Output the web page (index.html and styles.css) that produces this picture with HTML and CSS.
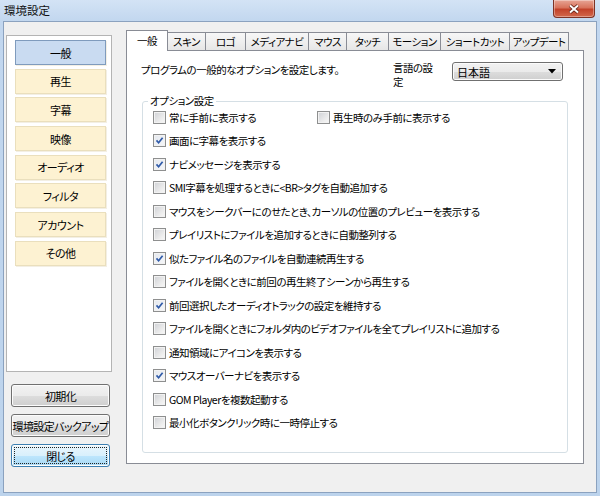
FILE: index.html
```html
<!DOCTYPE html>
<html lang="ja">
<head>
<meta charset="utf-8">
<title>環境設定</title>
<link rel="stylesheet" href="styles.css">
</head>
<body>
<div class="window">
  <div class="titlebar">
    <span class="title">環境設定</span>
    <div class="close">
      <svg width="12" height="10" viewBox="0 0 12 10"><path class="xs" d="M2 1.5 L10 8.5 M10 1.5 L2 8.5"/><path class="xf" d="M2 1.5 L10 8.5 M10 1.5 L2 8.5"/></svg>
    </div>
  </div>
  <div class="client">
    <div class="side">
      <div class="navpanel">
        <div class="nav active">一般</div>
        <div class="nav">再生</div>
        <div class="nav">字幕</div>
        <div class="nav">映像</div>
        <div class="nav">オーディオ</div>
        <div class="nav">フィルタ</div>
        <div class="nav">アカウント</div>
        <div class="nav">その他</div>
      </div>
      <div class="btns">
        <button class="btn">初期化</button>
        <button class="btn">環境設定バックアップ</button>
        <button class="btn focus">閉じる</button>
      </div>
    </div>
    <div class="main">
      <div class="tabs">
        <div class="tab sel">一般</div>
        <div class="tab">スキン</div>
        <div class="tab">ロゴ</div>
        <div class="tab">メディアナビ</div>
        <div class="tab">マウス</div>
        <div class="tab">タッチ</div>
        <div class="tab">モーション</div>
        <div class="tab">ショートカット</div>
        <div class="tab">アップデート</div>
      </div>
      <div class="panel">
        <div class="head">
          <p class="desc">プログラムの一般的なオプションを設定します。</p>
          <div class="lang">
            <span class="lang-label">言語の設<br>定</span>
            <div class="combo"><span>日本語</span><svg width="8" height="5" viewBox="0 0 8 5"><path d="M0 0 H8 L4 4.5 Z"/></svg></div>
          </div>
        </div>
        <fieldset class="group">
          <legend>オプション設定</legend>
          <div class="opts">
            <div class="row">
              <label class="opt first"><span class="cb"></span>常に手前に表示する</label>
              <label class="opt"><span class="cb"></span>再生時のみ手前に表示する</label>
            </div>
            <div class="row"><label class="opt"><span class="cb on"><svg viewBox="0 0 11 11"><path d="M2.5 5.4 L4.6 7.7 L8.6 2.8"/></svg></span>画面に字幕を表示する</label></div>
            <div class="row"><label class="opt"><span class="cb on"><svg viewBox="0 0 11 11"><path d="M2.5 5.4 L4.6 7.7 L8.6 2.8"/></svg></span>ナビメッセージを表示する</label></div>
            <div class="row"><label class="opt"><span class="cb"></span>SMI字幕を処理するときに&lt;BR&gt;タグを自動追加する</label></div>
            <div class="row"><label class="opt"><span class="cb"></span>マウスをシークバーにのせたとき、カーソルの位置のプレビューを表示する</label></div>
            <div class="row"><label class="opt"><span class="cb"></span>プレイリストにファイルを追加するときに自動整列する</label></div>
            <div class="row"><label class="opt"><span class="cb on"><svg viewBox="0 0 11 11"><path d="M2.5 5.4 L4.6 7.7 L8.6 2.8"/></svg></span>似たファイル名のファイルを自動連続再生する</label></div>
            <div class="row"><label class="opt"><span class="cb"></span>ファイルを開くときに前回の再生終了シーンから再生する</label></div>
            <div class="row"><label class="opt"><span class="cb on"><svg viewBox="0 0 11 11"><path d="M2.5 5.4 L4.6 7.7 L8.6 2.8"/></svg></span>前回選択したオーディオトラックの設定を維持する</label></div>
            <div class="row"><label class="opt"><span class="cb"></span>ファイルを開くときにフォルダ内のビデオファイルを全てプレイリストに追加する</label></div>
            <div class="row"><label class="opt"><span class="cb"></span>通知領域にアイコンを表示する</label></div>
            <div class="row"><label class="opt"><span class="cb on"><svg viewBox="0 0 11 11"><path d="M2.5 5.4 L4.6 7.7 L8.6 2.8"/></svg></span>マウスオーバーナビを表示する</label></div>
            <div class="row"><label class="opt"><span class="cb"></span>GOM Playerを複数起動する</label></div>
            <div class="row"><label class="opt"><span class="cb"></span>最小化ボタンクリック時に一時停止する</label></div>
          </div>
        </fieldset>
      </div>
    </div>
  </div>
</div>
</body>
</html>
```
FILE: styles.css
```css
* { box-sizing: border-box; }
html, body {
  margin: 0;
  padding: 0;
}
body {
  width: 600px;
  height: 496px;
  overflow: hidden;
  font-family: "Noto Sans CJK JP", "Noto Sans", sans-serif;
  font-size: 10.5px;
  letter-spacing: -0.5px;
  font-feature-settings: "palt";
  color: #000;
  background: #bcd2ec;
}
.window {
  height: 496px;
  display: flex;
  flex-direction: column;
  background: linear-gradient(to bottom, #d3e3f5 0px, #c2d7ef 21px, #bcd3ec 100%);
}
.titlebar {
  height: 21px;
  flex: none;
  display: flex;
  align-items: flex-start;
  padding-left: 4px;
}
.title {
  line-height: 20px;
  font-size: 11.5px;
  letter-spacing: 0;
  color: #111;
}
.close {
  margin-left: auto;
  margin-right: 5px;
  width: 42px;
  height: 18px;
  border: 1px solid #7d3326;
  border-top: none;
  border-radius: 0 0 4px 4px;
  background: linear-gradient(to bottom, #e7a595 0%, #d8735c 45%, #c2422a 55%, #d2684c 100%);
  display: flex;
  align-items: center;
  justify-content: center;
  box-shadow: inset 0 0 0 1px rgba(255,255,255,0.35);
}
.close .xs { stroke: #5b1d12; stroke-width: 3.6; fill: none; }
.close .xf { stroke: #fff; stroke-width: 2; fill: none; }
.client {
  flex: 1;
  margin: 0 3px 3px 3px;
  border: 1px solid #8ba2bf;
  background: #f0f0f0;
  display: flex;
}
.side {
  width: 106px;
  margin-left: 2px;
  padding-top: 13px;
  display: flex;
  flex-direction: column;
}
.navpanel {
  height: 337px;
  border: 1px solid #b4b4b4;
  background: #fff;
  padding: 4px 5px 0 8px;
  display: flex;
  flex-direction: column;
  gap: 3.7px;
}
.nav {
  height: 25px;
  border: 1px solid #eadfbd;
  background: #fdf2d2;
  display: flex;
  align-items: center;
  justify-content: center;
  box-shadow: 1px 1px 0 #f3efe4;
  font-size: 11px;
}
.nav.active {
  background: #c9dbf1;
  border-color: #7f9bbd;
}
.btns {
  margin-top: 12px;
  padding-left: 5px;
  display: flex;
  flex-direction: column;
  gap: 7px;
}
.btn {
  width: 99px;
  height: 23px;
  padding: 0;
  font: inherit;
  font-size: 11px;
  letter-spacing: -0.6px;
  white-space: nowrap;
  font-feature-settings: "palt";
  color: #000;
  border: 1px solid #707070;
  border-radius: 3px;
  background: linear-gradient(to bottom, #f2f2f2 0%, #ebebeb 50%, #dddddd 51%, #cfcfcf 100%);
  box-shadow: inset 0 0 0 1px #fcfcfc;
}
.btn.focus {
  border-color: #3c7fb1;
  background: linear-gradient(to bottom, #eaf6fd 0%, #d9f0fc 50%, #bee6fd 51%, #a7d9f5 100%);
  outline: 1px dotted #222;
  outline-offset: -4px;
}
.main {
  width: 458px;
  margin-left: 14px;
  padding-top: 8px;
  display: flex;
  flex-direction: column;
}
.tabs {
  display: flex;
  align-items: flex-end;
  height: 21px;
  margin-bottom: -1px;
  position: relative;
  z-index: 1;
}
.tab {
  height: 18px;
  margin-bottom: 1px;
  border: 1px solid #898c95;
  border-bottom: none;
  border-left: none;
  background: linear-gradient(to bottom, #f7f7f7 0%, #efefef 50%, #e6e6e6 100%);
  display: flex;
  align-items: center;
  justify-content: center;
  white-space: nowrap;
}
.tab.sel {
  height: 21px;
  margin-bottom: 0;
  border-left: 1px solid #898c95;
  background: #fff;
  padding-bottom: 2px;
}
.tab:nth-child(1) { width: 42px; }
.tab:nth-child(2) { width: 38px; }
.tab:nth-child(3) { width: 40px; }
.tab:nth-child(4) { width: 63px; }
.tab:nth-child(5) { width: 38px; }
.tab:nth-child(6) { width: 42px; }
.tab:nth-child(7) { width: 52px; }
.tab:nth-child(8) { width: 69px; }
.tab:nth-child(9) { width: 59px; }
.panel {
  height: 414px;
  border: 1px solid #898c95;
  background: #fff;
  display: flex;
  flex-direction: column;
}
.head {
  display: flex;
  align-items: flex-start;
  padding: 11px 20px 0 14px;
}
.desc {
  margin: 0;
  line-height: 16px;
}
.lang {
  margin-left: auto;
  width: 170px;
  height: 24px;
  display: flex;
  justify-content: space-between;
  align-items: flex-start;
}
.lang-label {
  margin-top: -1px;
  line-height: 13.5px;
  white-space: nowrap;
}
.combo {
  width: 111px;
  height: 19px;
  border: 1px solid #707070;
  border-radius: 3px;
  background: linear-gradient(to bottom, #f2f2f2 0%, #ebebeb 50%, #dddddd 51%, #cfcfcf 100%);
  box-shadow: inset 0 0 0 1px #fbfbfb;
  display: flex;
  align-items: center;
  justify-content: space-between;
  padding: 0 6px 0 4px;
  font-size: 11px;
  letter-spacing: 0;
}
.combo svg path { fill: #000; }
.group {
  flex: 1;
  margin: 9px 15px 10px 15px;
  padding: 0 10px;
  border: 1px solid #d5dfe5;
  border-radius: 3px;
  min-width: 0;
}
.group legend {
  padding: 0 2px;
  margin-left: -5px;
  line-height: 12px;
}
.opts {
  margin-top: -1.75px;
  display: flex;
  flex-direction: column;
}
.row {
  height: 23.5px;
  display: flex;
  align-items: center;
}
.opt {
  display: flex;
  align-items: center;
  gap: 3px;
  white-space: nowrap;
}
.opt.first { width: 164px; }
.cb {
  width: 13px;
  height: 13px;
  flex: none;
  border: 1px solid #8e8f8f;
  background: linear-gradient(135deg, #cfd1d5 0%, #eeeeee 70%, #f8f8f8 100%);
  box-shadow: inset 0 0 0 1px #f2f2f2;
  display: flex;
  align-items: center;
  justify-content: center;
}
.cb.on {
  background: linear-gradient(135deg, #e4e8ee 0%, #f6f7f9 100%);
}
.cb svg {
  width: 11px;
  height: 11px;
}
.cb svg path {
  fill: none;
  stroke: #2f5aa8;
  stroke-width: 1.7;
}
```
